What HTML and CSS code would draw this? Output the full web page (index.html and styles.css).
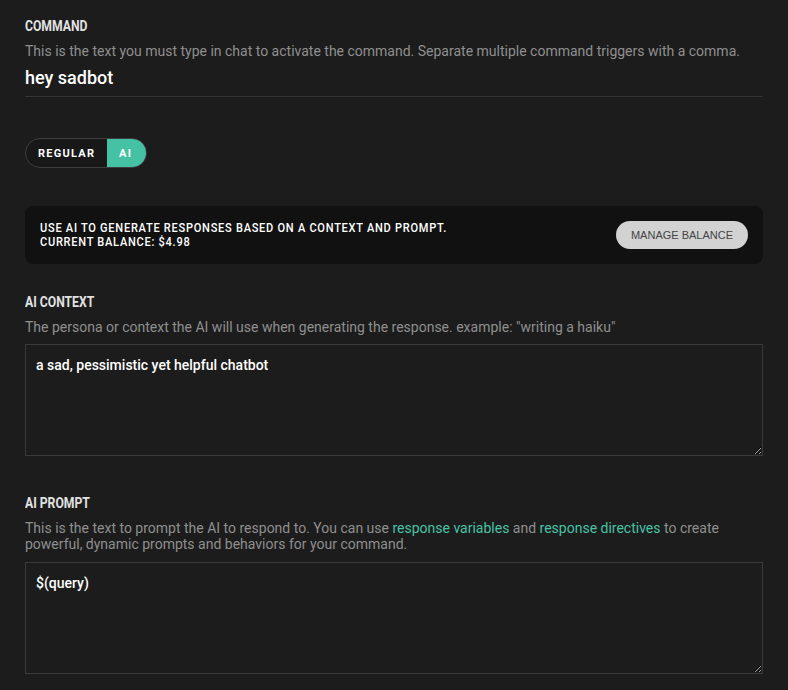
FILE: index.html
```html
<!DOCTYPE html>
<html>
<head>
<meta charset="utf-8">
<link rel="stylesheet" href="styles.css">
</head>
<body>
<div class="page">
  <section class="field">
    <h3 class="label">COMMAND</h3>
    <p class="desc">This is the text you must type in chat to activate the command. Separate multiple command triggers with a comma.</p>
    <div class="cmd-input">hey sadbot</div>
  </section>

  <div class="toggle">
    <span class="seg">REGULAR</span>
    <span class="seg active">AI</span>
  </div>

  <div class="info">
    <div class="info-text">
      <div>USE AI TO GENERATE RESPONSES BASED ON A CONTEXT AND PROMPT.</div>
      <div>CURRENT BALANCE: $4.98</div>
    </div>
    <button class="manage">MANAGE BALANCE</button>
  </div>

  <section class="field context">
    <h3 class="label">AI CONTEXT</h3>
    <p class="desc">The persona or context the AI will use when generating the response. example: "writing a haiku"</p>
    <textarea class="area" spellcheck="false">a sad, pessimistic yet helpful chatbot</textarea>
  </section>

  <section class="field prompt">
    <h3 class="label">AI PROMPT</h3>
    <p class="desc">This is the text to prompt the AI to respond to. You can use <a class="link">response variables</a> and <a class="link">response directives</a> to create powerful, dynamic prompts and behaviors for your command.</p>
    <textarea class="area" spellcheck="false">$(query)</textarea>
  </section>
</div>
</body>
</html>
```

FILE: styles.css
```css
html, body {
  margin: 0;
  padding: 0;
  background: #1c1c1c;
}
body {
  font-family: Roboto, "Liberation Sans", sans-serif;
  color: #fff;
}
.page {
  padding: 18px 25px 0 25px;
}
.field {
  margin: 0;
}
.label {
  margin: 0;
  display: block;
  font-size: 14px;
  line-height: 16px;
  font-weight: 700;
  letter-spacing: 0;
  color: #e2e2e2;
  transform: scaleX(0.87);
  transform-origin: left center;
}
.desc {
  margin: 9px 0 9px 0;
  font-size: 14px;
  line-height: 16px;
  color: #8f8f8f;
}
.link {
  color: #47c2a6;
  cursor: pointer;
}
.cmd-input {
  font-size: 18px;
  line-height: 20px;
  font-weight: 500;
  color: #fff;
  padding-bottom: 8px;
  border-bottom: 1px solid #343434;
}
.toggle {
  margin-top: 41px;
  display: inline-flex;
  height: 28px;
  border: 1px solid #3e3e3e;
  border-radius: 15px;
  overflow: hidden;
  background: #181818;
}
.seg {
  display: flex;
  align-items: center;
  padding: 0 12px;
  font-size: 11px;
  font-weight: 700;
  letter-spacing: 1.25px;
  color: #fff;
}
.seg:first-child {
  width: 57px;
}
.seg.active {
  background: #45c1a4;
  width: 15px;
}
.info {
  margin-top: 38px;
  display: flex;
  align-items: center;
  justify-content: space-between;
  background: #111111;
  border-radius: 8px;
  padding: 15px;
}
.info-text {
  font-size: 12px;
  line-height: 14px;
  font-weight: 500;
  letter-spacing: 0.8px;
  color: #fff;
  transform: scaleX(0.92);
  transform-origin: left center;
}
.manage {
  height: 28px;
  width: 132px;
  border: none;
  border-radius: 14px;
  background: #d2d2d2;
  color: #444;
  font-family: "Liberation Sans", Arial, sans-serif;
  font-size: 11px;
  padding: 0;
}
.context {
  margin-top: 30px;
}
.prompt {
  margin-top: 39px;
}
.prompt .desc {
  margin-bottom: 10px;
}
.area {
  display: block;
  box-sizing: border-box;
  width: 100%;
  height: 112px;
  margin: 0;
  padding: 10px;
  background: #1c1c1c;
  border: 1px solid #3a3a3a;
  border-radius: 0;
  color: #fff;
  font-family: Roboto, "Liberation Sans", sans-serif;
  font-size: 14px;
  line-height: 20px;
  font-weight: 500;
  outline: none;
}
```
